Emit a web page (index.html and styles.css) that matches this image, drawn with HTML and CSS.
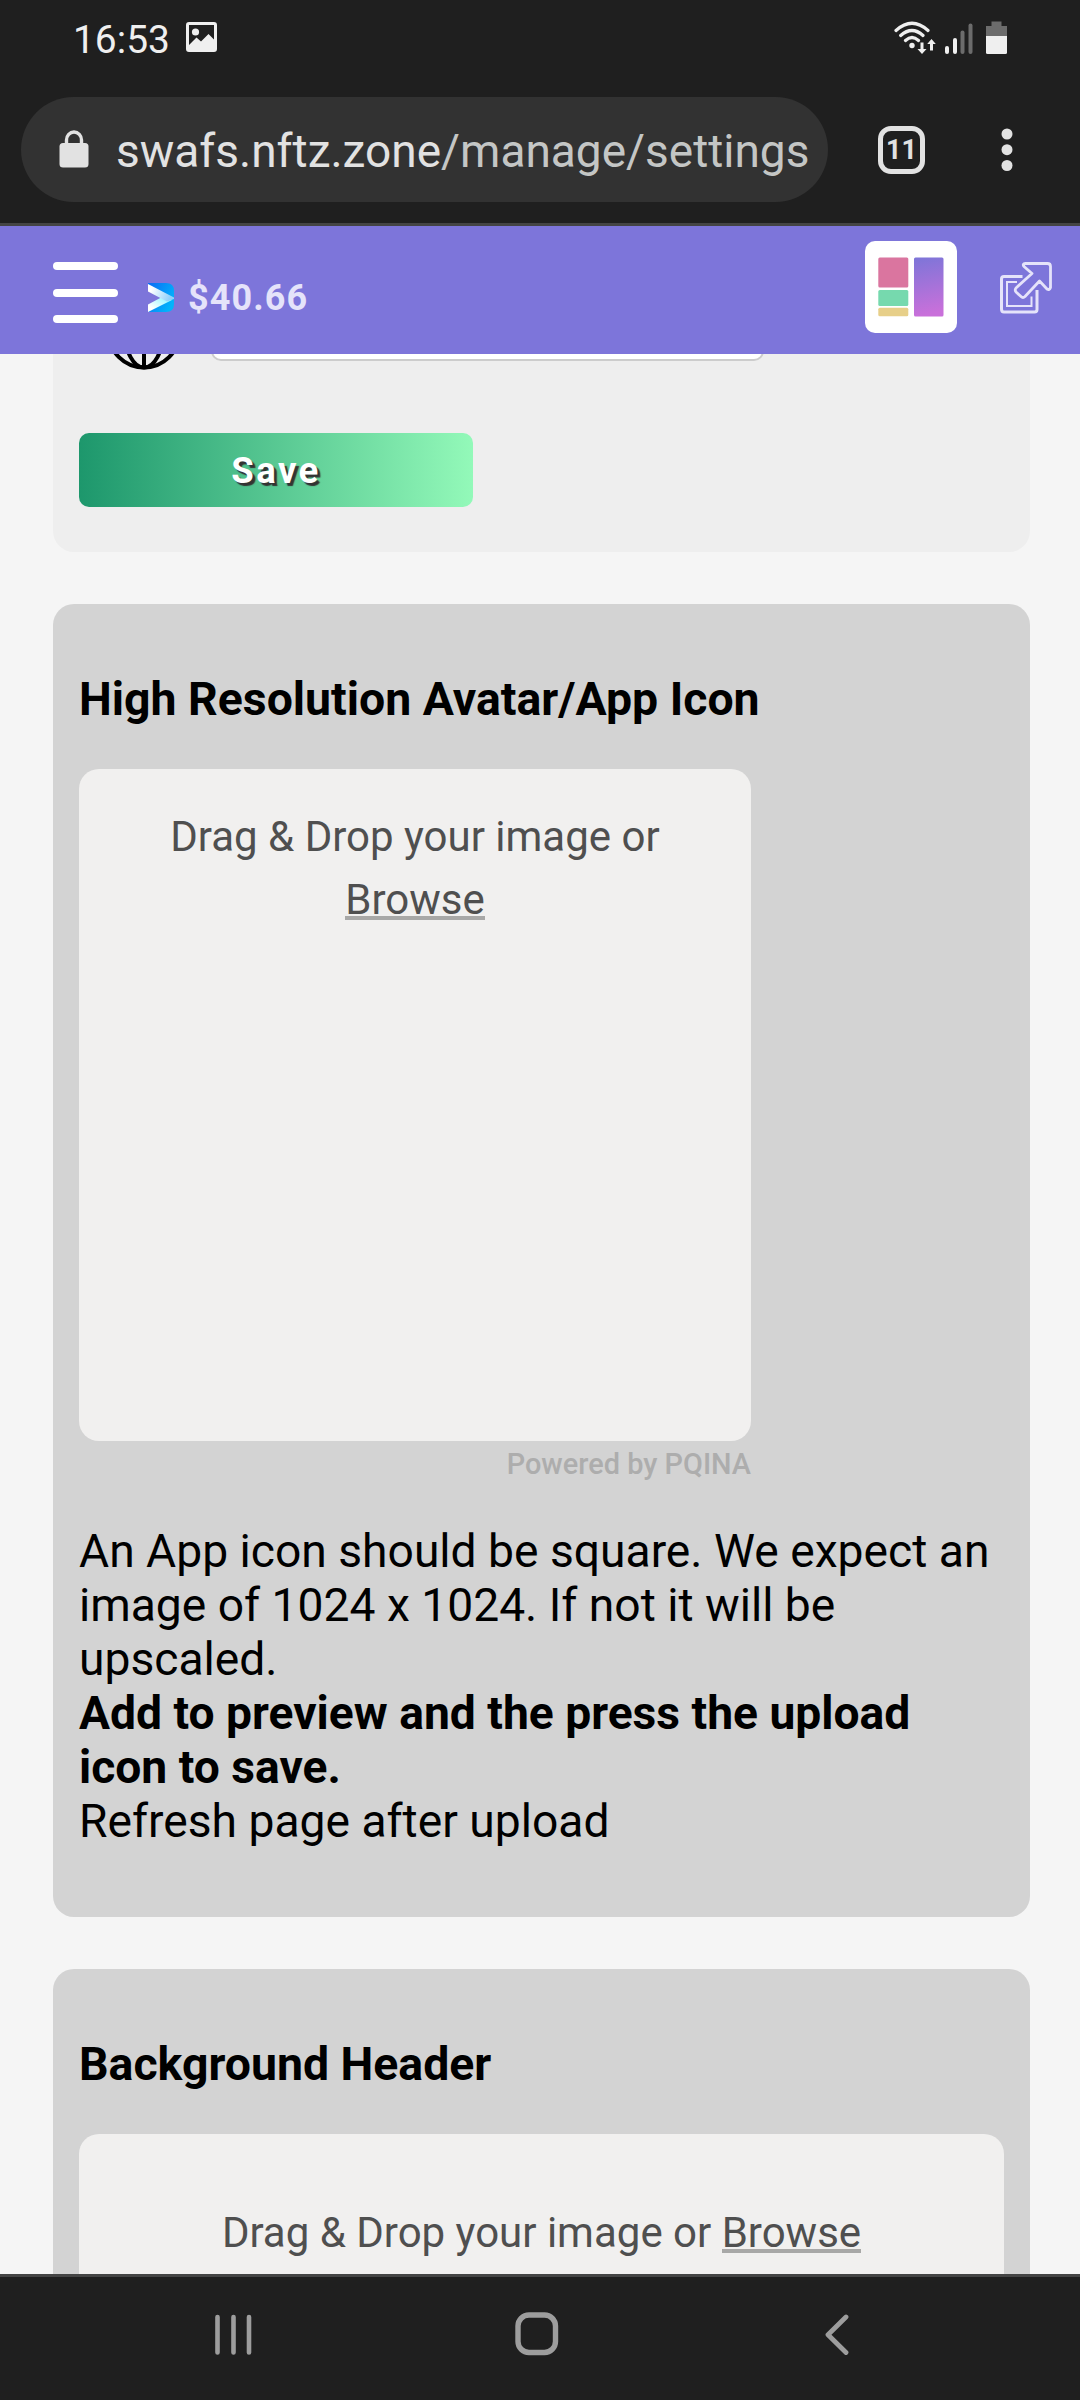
FILE: index.html
```html
<!DOCTYPE html>
<html lang="en">
<head>
<meta charset="utf-8">
<title>Settings</title>
<link rel="stylesheet" href="styles.css">
</head>
<body>
<div class="screen">
  <div class="status">
    <span class="clock">16:53</span>
    <svg class="photo" width="31" height="30" viewBox="0 0 31 30"><rect x="1.5" y="1.5" width="28" height="27" rx="1.5" fill="none" stroke="#efefef" stroke-width="3"/><circle cx="9.5" cy="10" r="3.6" fill="#efefef"/><path d="M2 24L10.500 15.500L15 19.500L22.500 12L29 18.500V28H2Z" fill="#efefef"/></svg>
    <svg class="signals" width="114" height="34" viewBox="0 0 114 34">
      <g fill="none" stroke="#efefef" stroke-width="3.200" stroke-linecap="round"><path d="M3 9.500Q19-5 35 9.500M7.700 14.500Q19 4.500 30 14.500M12.500 19.500Q19 13.500 25.500 19.500"/></g>
      <circle cx="19" cy="24.500" r="2.700" fill="#efefef"/>
      <g fill="#efefef"><path d="M27.500 21.500h3v6.500h3l-4.500 5-4.500-5h3ZM37 29.500h3v-6.500h2.800l-4.300-5-4.300 5h2.800Z"/><rect x="52" y="25" width="4" height="8" rx="2"/><rect x="60" y="17" width="4" height="16" rx="2"/></g>
      <g fill="#6c6c6c"><rect x="67.500" y="9.500" width="4" height="23.500" rx="2"/><rect x="75.500" y="2.500" width="4" height="30.500" rx="2"/><path d="M98.500 0.500h10v4.500h5.500v11h-21v-11h5.500Z"/></g>
      <path d="M93 15h21v16.500q0 1.500-1.500 1.500h-18q-1.500 0-1.500-1.500Z" fill="#efefef"/>
    </svg>
  </div>
  <div class="browser">
    <div class="omnibox">
      <svg width="30" height="38" viewBox="0 0 30 38"><path d="M7.500 15V10a7.500 8 0 0 1 15 0v5" fill="none" stroke="#e2e2e2" stroke-width="3.400"/><rect x="0.500" y="13" width="29" height="24.500" rx="3.500" fill="#e2e2e2"/></svg>
      <span class="url">swafs.nftz.zone<span class="path">/manage/settings</span></span>
    </div>
    <span class="tabs">11</span>
    <svg class="dots" width="12" height="44" viewBox="0 0 12 44" fill="#e2e2e2"><circle cx="6" cy="6" r="5.500"/><circle cx="6" cy="21.700" r="5.500"/><circle cx="6" cy="37.500" r="5.500"/></svg>
  </div>
  <header class="appbar">
    <div class="burger"><i></i><i></i><i></i></div>
    <svg class="coin" width="26" height="29" viewBox="0 0 26 29">
      <defs><linearGradient id="b" x1="0" y1="0" x2="1" y2="0.6"><stop offset="0" stop-color="#0b6cf5"/><stop offset="1" stop-color="#02b4fb"/></linearGradient><linearGradient id="w" x1="0" y1="0" x2="1" y2="0.3"><stop offset="0.2" stop-color="#fff"/><stop offset="1" stop-color="#8fd0fb"/></linearGradient><linearGradient id="c" x1="0" y1="1" x2="1" y2="0"><stop offset="0.2" stop-color="#fff"/><stop offset="1" stop-color="#7cf4ff"/></linearGradient></defs>
      <path d="M0 0H18Q26 0 26 8V21Q26 29 18 29H0L16 18L18 15L0 6Z" fill="url(#b)"/>
      <path d="M0 21.500L15 13.500L24 17L0 29Z" fill="url(#c)"/>
      <path d="M0 1L26 14.500V16L19 18.500L0 8.500Z" fill="url(#w)"/>
    </svg>
    <span class="price">$40.66</span>
    <svg class="avatar" width="92" height="92" viewBox="0 0 92 92">
      <defs><linearGradient id="p" x1="0" y1="0" x2="0.100" y2="1"><stop offset="0" stop-color="#7d75d8"/><stop offset="1" stop-color="#c970da"/></linearGradient></defs>
      <rect width="92" height="92" rx="10" fill="#fff"/>
      <rect x="13.300" y="16.500" width="30" height="30" rx="1.500" fill="#da759f"/><rect x="13.300" y="49" width="30" height="16" rx="1.500" fill="#76d9ae"/><rect x="13.300" y="66.800" width="30" height="8.500" rx="1.500" fill="#e7cf89"/><rect x="49" y="16.500" width="29.500" height="59" rx="1.500" fill="url(#p)"/>
    </svg>
    <svg class="external" width="52" height="52" viewBox="0 0 52 52" fill="none" stroke="#e5e3fa" stroke-linejoin="round">
      <path d="M22.500 14.500H4Q1.500 14.500 1.500 17V47Q1.500 50 4 50H34.500Q37 50 37 47.500V28" stroke-width="3"/>
      <path d="M17 20H7V44H31.500V34.500" stroke-width="2" stroke-linejoin="miter"/>
      <path d="M25.500 1.500H47.500Q50.500 1.500 50.500 4.500V25.500Q49.500 28.500 47 27L39.500 19L25 34.500Q23 36.500 21 34.500L16 30Q14.500 28 16 26L32 11.500L24 4.500Q22 2 25.500 1.500Z" stroke-width="2.800"/>
    </svg>
  </header>
  <main class="page">
    <section class="card form">
      <div class="field">
        <svg width="76" height="76" viewBox="0 0 76 76" fill="none" stroke="#000" stroke-width="4"><circle cx="38" cy="38" r="35.500"/><ellipse cx="38" cy="38" rx="19" ry="35.500"/><path d="M38 2V74M2 38H74"/></svg>
        <div class="input"></div>
      </div>
      <button class="save">Save</button>
    </section>
    <section class="card">
      <h2>High Resolution Avatar/App Icon</h2>
      <div class="drop square"><span>Drag &amp; Drop your image or<br><u>Browse</u></span></div>
      <div class="credit">Powered by PQINA</div>
      <p>An App icon should be square. We expect an image of 1024 x 1024. If not it will be upscaled.<br><b>Add to preview and the press the upload icon to save.</b><br>Refresh page after upload</p>
    </section>
    <section class="card">
      <h2>Background Header</h2>
      <div class="drop wide"><span>Drag &amp; Drop your image or <u>Browse</u></span></div>
    </section>
  </main>
  <nav class="navbar">
    <svg width="38" height="42" viewBox="0 0 38 42" stroke="#9d9d9d" stroke-width="4.600" stroke-linecap="round"><path d="M3.500 3V38.500M19.500 3V38.500M35 3V38.500"/></svg>
    <svg width="44" height="44" viewBox="0 0 44 44" fill="none" stroke="#9d9d9d" stroke-width="5.400"><rect x="3" y="3" width="37.500" height="37.500" rx="11"/></svg>
    <svg width="26" height="42" viewBox="0 0 26 42" fill="none" stroke="#9d9d9d" stroke-width="4.800" stroke-linecap="round" stroke-linejoin="round"><path d="M22 3L4 20.700L22 38.500"/></svg>
  </nav>
</div>
</body>
</html>
```
FILE: styles.css
```css
* { box-sizing: border-box; }
body { margin: 0; font-family: Roboto, sans-serif; background: #f5f5f5; }
svg { display: block; flex: none; }
.screen { width: 1080px; height: 2400px; display: flex; flex-direction: column; overflow: hidden; }

.status { height: 97px; flex: none; display: flex; align-items: flex-start; background: #1f1f1f; padding: 21px 73px 0 73px; }
.clock { font-size: 38.9px; line-height: 38px; color: #efefef; width: 113px; }
.photo { margin-top: 1px; }
.signals { margin-left: auto; }

.browser { height: 129px; flex: none; display: flex; align-items: flex-start; background: #1f1f1f; border-bottom: 3px solid #444; padding-left: 21px; }
.omnibox { width: 807px; height: 105px; border-radius: 53px; background: #323232; display: flex; align-items: center; padding-left: 38px; }
.omnibox svg { margin-top: -2px; }
.url { font-size: 46px; line-height: 60px; color: #e2e2e2; margin: 2px 0 0 27px; white-space: nowrap; }
.path { color: #c4c6c5; }
.tabs { width: 47px; height: 48px; border: 5px solid #e2e2e2; border-radius: 13px; color: #e2e2e2; font-size: 27px; font-weight: 700; line-height: 38px; text-align: center; margin: 29px 0 0 50px; }
.dots { margin: 31px 0 0 76px; }

.appbar { height: 128px; flex: none; background: #7d75da; display: flex; align-items: flex-start; padding-left: 53px; }
.burger { width: 65px; display: grid; gap: 18.500px; margin-top: 36px; }
.burger i { height: 8px; border-radius: 4px; background: #fff; }
.coin { margin: 57px 0 0 30px; }
.price { font-size: 36px; font-weight: 700; line-height: 42px; letter-spacing: 1.1px; color: #e5e3fa; margin: 51px 0 0 14px; }
.avatar { margin: 15px 0 0 auto; }
.external { margin: 36px 28px 0 43px; }

.page { flex: 1; min-height: 0; overflow: hidden; background: #f5f5f5; padding: 0 50px 0 53px; }
.card { background: #d3d3d3; border-radius: 21px; padding: 69px 26px 69px; margin-bottom: 52px; }
.form { height: 238px; margin-top: -40px; padding-top: 0; background: #eee; }
.field { display: flex; align-items: flex-end; gap: 29px; height: 56px; padding-left: 27px; }
.input { width: 553px; height: 90px; margin-bottom: 9px; border: 2px solid #ccc; border-radius: 10px; background: #fff; }
.save { display: block; width: 394px; height: 74px; margin-top: 63px; padding: 0; border: 0; border-radius: 10px; background: linear-gradient(to right, #1d976c, #93f9b9); color: #fff; font: 700 36.5px Roboto, sans-serif; letter-spacing: 2.4px; text-shadow: 3px 3px 1px #333; }
h2 { margin: 0 0 43px; font-size: 46.4px; line-height: 53px; font-weight: 700; }
.drop { background: #f1f0ef; border-radius: 20px; font-size: 42px; line-height: 63px; color: #4f4f4f; text-align: center; }
.drop u { text-decoration: none; background: linear-gradient(#a8a8a7, #a8a8a7) 0 41px / 100% 4px no-repeat; }
.square { width: 672px; height: 672px; padding-top: 36px; }
.wide { height: 300px; padding-top: 67px; }
.credit { width: 672px; margin-top: 6px; text-align: right; font-size: 28.9px; line-height: 34px; font-weight: 500; color: #adadad; }
p { margin: 43px 0 0; font-size: 46.2px; line-height: 54px; }

.navbar { height: 126px; flex: none; background: #1f1f1f; border-top: 3px solid #444; display: flex; align-items: flex-start; padding: 37px 230px 0 214px; justify-content: space-between; }
.navbar svg:nth-child(2) { margin: -2px 0 0 -3px; }
```
